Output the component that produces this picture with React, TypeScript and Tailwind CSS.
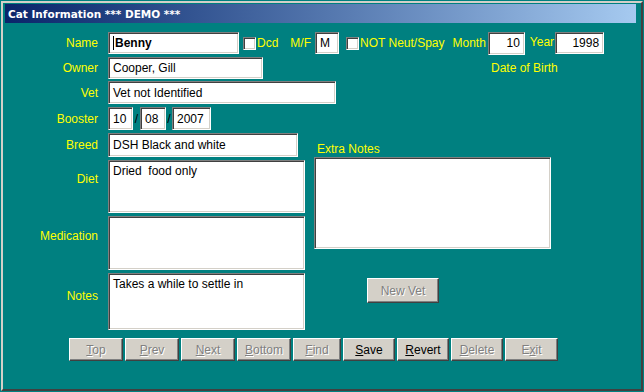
import React from 'react';

const sunken =
  'bg-white border border-t-[#808080] border-l-[#808080] border-b-white border-r-white shadow-[inset_1px_1px_0_#404040,inset_-1px_-1px_0_#d4d0c8]';

function Field({ w, h = 'h-[22px]', children, right, bold }: { w: string; h?: string; children?: React.ReactNode; right?: boolean; bold?: boolean }) {
  return (
    <div className={`${sunken} ${w} ${h} flex items-center px-[4px] text-black whitespace-pre ${right ? 'justify-end' : ''} ${bold ? 'font-bold' : ''}`}>
      {children}
    </div>
  );
}

function Area({ h, children }: { h: string; children?: React.ReactNode }) {
  return (
    <div className={`${sunken} w-[197px] ${h} px-[4px] pt-[3px] leading-[14px] text-black whitespace-pre`}>
      {children}
    </div>
  );
}

function Check() {
  return <div className={`${sunken} w-[13px] h-[13px]`} />;
}

function Label({ children, w = 'w-[93px]', pt }: { children: React.ReactNode; w?: string; pt?: string }) {
  return <div className={`${w} ${pt ?? ''} text-right text-[#ffff00] shrink-0`}>{children}</div>;
}

function Btn({ w, h = 'h-[23px]', disabled, children }: { w: string; h?: string; disabled?: boolean; children: React.ReactNode }) {
  return (
    <div
      className={`${w} ${h} flex items-center justify-center bg-[#d4d0c8] border border-t-white border-l-white border-b-[#404040] border-r-[#404040] shadow-[inset_-1px_-1px_0_#808080] ${
        disabled ? 'text-[#808080] [text-shadow:1px_1px_0_#ffffff]' : 'text-black'
      }`}
    >
      <span>{children}</span>
    </div>
  );
}

export default function App() {
  return (
    <div className="w-[644px] h-[392px] bg-[#008080] p-px font-['Liberation_Sans',Arial,sans-serif] text-[12px] leading-[14px]">
      <div className="h-full flex flex-col border-2 border-t-[#d4d0c8] border-l-[#d4d0c8] border-b-[#404040] border-r-[#404040] pl-[2px] pt-[1px] pr-[5px]">
        <div className="h-[19px] shrink-0 flex items-center pl-[3px] bg-gradient-to-r from-[#0a246a] to-[#a6caf0] text-white font-bold font-['DejaVu_Sans',sans-serif] text-[10.5px]">
          Cat Information *** DEMO ***
        </div>

        <div className="flex-1 flex flex-col">
          {/* Name row */}
          <div className="flex items-center h-[22px] mt-[9px]">
            <Label>Name</Label>
            <div className="ml-[10px]">
              <Field w="w-[131px]" bold>
                <span className="border-l border-black pl-px">Benny</span>
              </Field>
            </div>
            <div className="ml-[4px]"><Check /></div>
            <span className="ml-[1px] text-[#ffff00]">Dcd</span>
            <span className="ml-[12px] text-[#ffff00]">M/F</span>
            <div className="ml-[4px]">
              <Field w="w-[24px]">M</Field>
            </div>
            <div className="ml-[7px]"><Check /></div>
            <span className="ml-[1px] text-[#ffff00]">NOT Neut/Spay</span>
            <span className="ml-[8px] text-[#ffff00]">Month</span>
            <div className="ml-[2px]">
              <Field w="w-[37px]" h="h-[23px]" right>10</Field>
            </div>
            <span className="ml-[5px] mb-[3px] text-[#ffff00]">Year</span>
            <div className="ml-[1px]">
              <Field w="w-[49px]" right>1998</Field>
            </div>
          </div>

          {/* Owner row */}
          <div className="flex items-center h-[22px] mt-[3px]">
            <Label>Owner</Label>
            <div className="ml-[10px]">
              <Field w="w-[155px]">Cooper, Gill</Field>
            </div>
            <span className="ml-[228px] text-[#ffff00]">Date of Birth</span>
          </div>

          {/* Vet row */}
          <div className="flex items-center h-[23px] mt-[2px]">
            <Label>Vet</Label>
            <div className="ml-[10px]">
              <Field w="w-[228px]" h="h-[23px]">Vet not Identified</Field>
            </div>
          </div>

          {/* Booster row */}
          <div className="flex items-center h-[23px] mt-[3px]">
            <Label>Booster</Label>
            <div className="ml-[10px] flex items-center">
              <Field w="w-[25px]" h="h-[23px]">10</Field>
              <span className="w-[7px] text-center text-black">/</span>
              <Field w="w-[26px]" h="h-[23px]">08</Field>
              <span className="w-[6px] text-center text-black">/</span>
              <Field w="w-[39px]" h="h-[23px]">2007</Field>
            </div>
          </div>

          {/* Lower block */}
          <div className="flex mt-[3px]">
            <div className="w-[300px] flex flex-col">
              <div className="flex items-center h-[24px]">
                <Label>Breed</Label>
                <div className="ml-[10px]">
                  <Field w="w-[190px]" h="h-[24px]">DSH Black and white</Field>
                </div>
              </div>
              <div className="flex items-start mt-[3px]">
                <Label pt="pt-[12px]">Diet</Label>
                <div className="ml-[10px]">
                  <Area h="h-[53px]">Dried  food only</Area>
                </div>
              </div>
              <div className="flex items-start mt-[3px]">
                <Label pt="pt-[13px]">Medication</Label>
                <div className="ml-[10px]">
                  <Area h="h-[54px]" />
                </div>
              </div>
              <div className="flex items-start mt-[3px]">
                <Label pt="pt-[16px]">Notes</Label>
                <div className="ml-[10px]">
                  <Area h="h-[57px]">Takes a while to settle in</Area>
                </div>
              </div>
            </div>

            <div className="ml-[9px] flex flex-col">
              <div className="mt-[9px] pl-[3px] text-[#ffff00]">Extra Notes</div>
              <div className={`${sunken} mt-[1px] w-[237px] h-[92px]`} />
              <div className="mt-[29px] ml-[53px]">
                <Btn w="w-[72px]" h="h-[25px]" disabled>New Vet</Btn>
              </div>
            </div>
          </div>

          {/* Buttons */}
          <div className="flex gap-[2px] mt-[8px] ml-[64px]">
            <Btn w="w-[54px]" disabled><u>T</u>op</Btn>
            <Btn w="w-[54px]" disabled><u>P</u>rev</Btn>
            <Btn w="w-[54px]" disabled><u>N</u>ext</Btn>
            <Btn w="w-[54px]" disabled><u>B</u>ottom</Btn>
            <Btn w="w-[48px]" disabled><u>F</u>ind</Btn>
            <Btn w="w-[52px]"><u>S</u>ave</Btn>
            <Btn w="w-[52px]"><u>R</u>evert</Btn>
            <Btn w="w-[52px]" disabled><u>D</u>elete</Btn>
            <Btn w="w-[53px]" disabled>E<u>x</u>it</Btn>
          </div>
        </div>
      </div>
    </div>
  );
}
